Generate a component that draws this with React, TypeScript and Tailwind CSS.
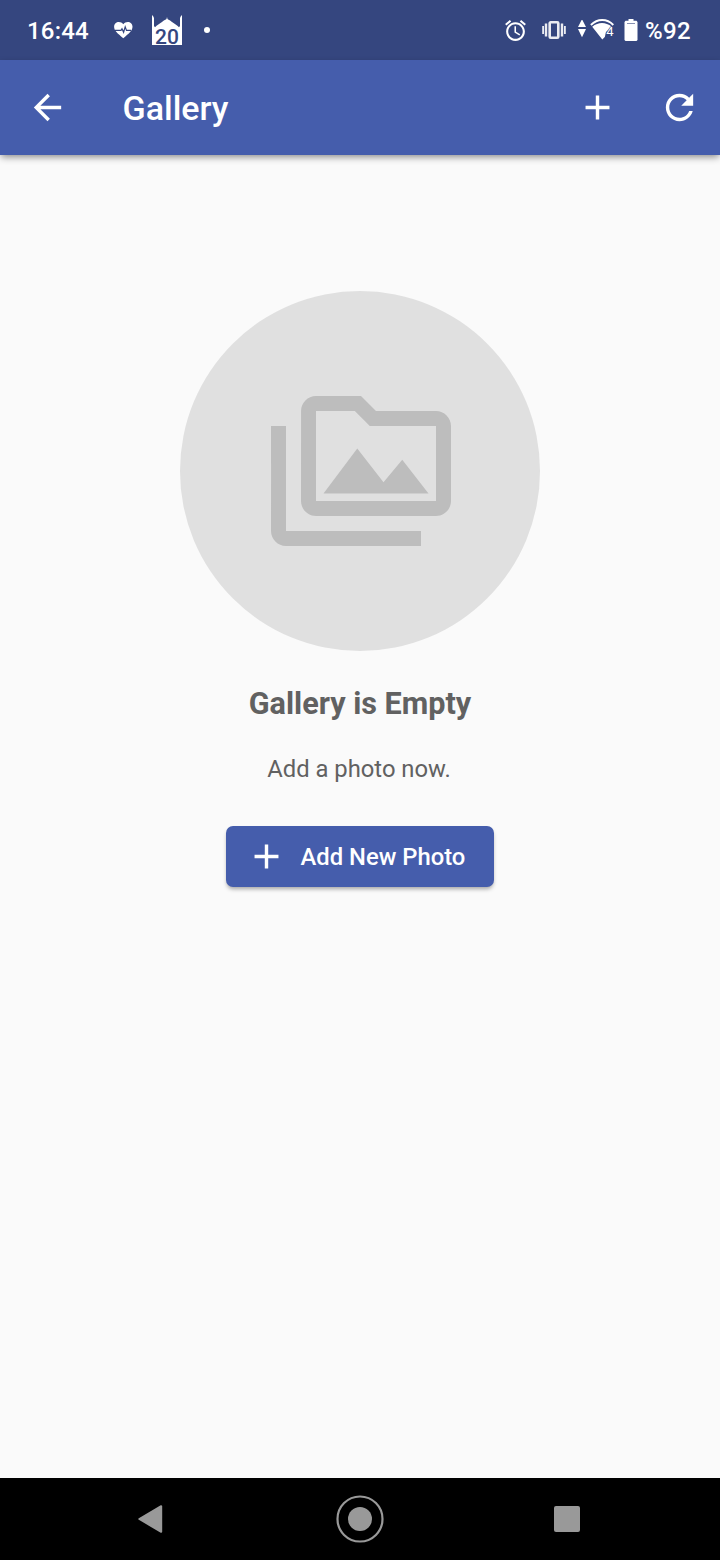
import type { ReactNode } from 'react'

function Icon({ d, className }: { d: string; className: string }) {
  return (
    <svg viewBox="0 0 24 24" fill="currentColor" className={`shrink-0 ${className}`}>
      <path d={d} />
    </svg>
  )
}

const icons = {
  back: 'M20 11H7.83l5.59-5.59L12 4l-8 8 8 8 1.41-1.41L7.83 13H20v-2z',
  add: 'M19 13h-6v6h-2v-6H5v-2h6V5h2v6h6v2z',
  refresh:
    'M17.65 6.35C16.2 4.9 14.21 4 12 4c-4.42 0-7.99 3.58-7.99 8s3.57 8 7.99 8c3.73 0 6.84-2.55 7.73-6h-2.08c-.82 2.33-3.04 4-5.65 4-3.31 0-6-2.69-6-6s2.69-6 6-6c1.66 0 3.14.69 4.22 1.78L13 11h7V4l-2.35 2.35z',
  media:
    'M2 6H0v5h.01L0 20c0 1.1.9 2 2 2h18v-2H2V6zm5 9h14l-3.5-4.5-2.5 3.01L11.5 9 7 15zM22 4h-8l-2-2H6c-1.1 0-1.99.9-1.99 2L4 16c0 1.1.9 2 2 2h16c1.1 0 2-.9 2-2V6c0-1.1-.9-2-2-2zm0 12H6V4h5.17l1.41 1.41.59.59H22v10z',
  alarm:
    'M22 5.72l-4.6-3.86-1.29 1.53 4.6 3.86L22 5.72zM7.88 3.39L6.6 1.86 2 5.71l1.29 1.53 4.59-3.85zM12.5 8H11v6l4.75 2.85.75-1.23-4-2.37V8zM12 4c-4.97 0-9 4.03-9 9s4.02 9 9 9c4.97 0 9-4.03 9-9s-4.03-9-9-9zm0 16c-3.87 0-7-3.13-7-7s3.13-7 7-7 7 3.13 7 7-3.13 7-7 7z',
}

function StatusBar() {
  return (
    <div className="flex h-[60px] items-center bg-[#35467f] pr-[28px] pl-[27px] text-[24px] leading-none font-medium">
      <span className="w-[86px] pt-[2px] tracking-[0.2px]">16:44</span>
      <svg viewBox="0 0 20 18" className="h-[18px] w-5">
        <path fill="#fff" d="M10.3 17.3C4.300 12.300 1.100 9.500 1.100 5.800 1.100 3 3.300 1 5.800 1c1.800 0 3.400.8 4.500 2.200C11.400 1.800 13 1 14.800 1c2.500 0 4.700 2 4.700 4.800 0 3.700-3.200 6.500-9.200 11.500z" />
        <path fill="none" stroke="#35467f" strokeWidth="1.2" d="M2 9.400h6l1-1.700 1.600 3.500 1.600-5.400 1.300 3.600H18" />
      </svg>
      <div className="relative ml-[19px] h-[30px] w-[30px]">
        <svg viewBox="0 0 30 30" className="h-[30px] w-[30px]">
          <path fill="#fff" d="M0 30V.5h.8L2 3v8l1 1.200c2-2.200 4.500-3.200 7-5.200 1.700-1.600 3-2 4.500-3l.5-2 .5 2c1.500 1 2.800 1.400 4.500 3 2.500 2 5 3 7 5.200L28 11V3L29.200.5h.8V30z" />
        </svg>
        <span className="absolute inset-x-0 top-[12px] text-center text-[21px] leading-[20px] text-[#35467f]">20</span>
      </div>
      <span className="ml-[22px] h-[6px] w-[6px] rounded-full bg-white" />

      <Icon d={icons.alarm} className="ml-auto h-[25px] w-[25px]" />
      <svg viewBox="0 0 24 18" fill="currentColor" className="ml-[14px] h-[18px] w-6 opacity-90">
        <path d="M.2 5H2v8H.2zM2.800 2.500h2.400v13H2.800zM18.800 2.500h2.400v13h-2.400zM22 5h1.800v8H22z" />
        <rect x="7.700" y="1.300" width="8.600" height="15.400" rx="1" fill="none" stroke="currentColor" strokeWidth="2.600" />
      </svg>
      <svg viewBox="0 0 8 20" fill="currentColor" className="ml-3 h-5 w-2">
        <path d="M4 -.8L8 7H0zM4 17.200L0 9h8z" />
      </svg>
      <svg viewBox="0 0 26 22" className="ml-1 h-[22px] w-[26px]">
        <path fill="none" stroke="#fff" strokeWidth="1.9" d="M.9 6C7.500-.6 17-.6 23.300 6" />
        <path fill="#fff" d="M2.200 7.800C8.500 2.800 15.500 2.800 21.800 7.800L16 13l-1.200 5-2.500 2.500z" />
        <text x="16.200" y="17" fontSize="13" fontWeight="400" fill="#fff" stroke="#35467f" strokeWidth="1.200" paintOrder="stroke">4</text>
      </svg>
      <svg viewBox="0 0 14 22" className="ml-[8px] h-[22px] w-[14px]">
        <path fill="#fff" d="M4.500 0h5v1.800h3L13.500 3v18l-1 1h-11l-1-1V3l1-1.200h3z" />
        <path fill="#35467f" opacity=".6" d="M3 4h8v1H3z" />
      </svg>
      <span className="ml-[7px] w-[47px] pt-[2px] tracking-[0.3px]">%92</span>
    </div>
  )
}

function BarButton({ children, label }: { children: ReactNode; label: string }) {
  return (
    <button aria-label={label} className="flex h-[82px] w-[82px] items-center justify-center">
      {children}
    </button>
  )
}

function AppBar() {
  return (
    <header className="z-10 flex h-[95px] items-center bg-[#455dac] shadow-[0_3px_7px_-1px_rgba(0,0,0,0.45)]">
      <div className="flex w-[122.5px] pl-[6px]">
        <BarButton label="Back">
          <Icon d={icons.back} className="h-[41px] w-[41px]" />
        </BarButton>
      </div>
      <h1 className="flex-1 pt-px text-[34px] leading-10 font-medium">Gallery</h1>
      <BarButton label="Add">
        <Icon d={icons.add} className="h-[41px] w-[41px]" />
      </BarButton>
      <BarButton label="Refresh">
        <Icon d={icons.refresh} className="h-[41px] w-[41px]" />
      </BarButton>
    </header>
  )
}

function EmptyGallery() {
  return (
    <main className="flex flex-1 flex-col items-center bg-[#fafafa] pt-[136px] text-[#616161]">
      <div className="flex h-[360px] w-[360px] items-center justify-center rounded-full bg-[#e0e0e0] pl-[1.5px] text-[#bdbdbd]">
        <Icon d={icons.media} className="h-[180px] w-[180px]" />
      </div>
      <h2 className="mt-[35px] text-[30.6px] leading-9 font-bold">Gallery is Empty</h2>
      <p className="mt-[33px] pr-[2px] text-[23.8px] leading-7">Add a photo now.</p>
      <button className="mt-[43px] flex h-[61px] w-[268px] items-center rounded-[7px] bg-[#455dac] pl-5 text-[23.8px] font-medium text-white shadow-[0_3px_4px_-1px_rgba(0,0,0,0.35)]">
        <Icon d={icons.add} className="h-[41px] w-[41px]" />
        <span className="ml-[13.5px] pt-[2px] whitespace-nowrap">Add New Photo</span>
      </button>
    </main>
  )
}

function NavigationBar() {
  return (
    <nav className="flex h-[82px] items-center justify-between bg-black pr-[140px] pl-[137px] text-[#999]">
      <svg viewBox="0 0 26 28" fill="currentColor" className="h-7 w-[26px]">
        <path stroke="currentColor" strokeWidth="2" strokeLinejoin="round" d="M2.300 14L24.200 1.200v25.600z" />
      </svg>
      <svg viewBox="0 0 48 48" className="ml-[2px] h-12 w-12">
        <circle cx="24" cy="24" r="22.5" fill="none" stroke="currentColor" strokeWidth="2.2" />
        <circle cx="24" cy="24" r="12" fill="currentColor" />
      </svg>
      <span className="h-[26px] w-[26px] rounded-[2px] bg-[#999]" />
    </nav>
  )
}

export default function App() {
  return (
    <div className="flex h-[1560px] w-[720px] flex-col overflow-hidden font-['Roboto',sans-serif] text-white">
      <StatusBar />
      <AppBar />
      <EmptyGallery />
      <NavigationBar />
    </div>
  )
}
